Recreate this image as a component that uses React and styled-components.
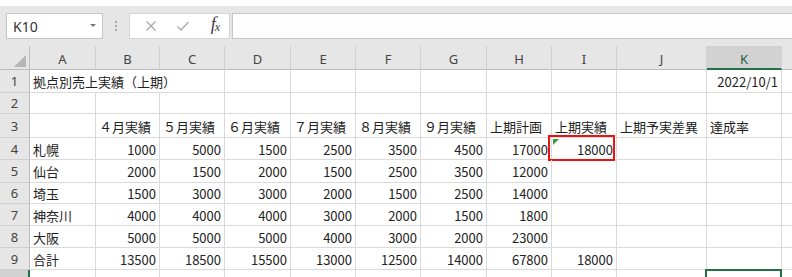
import React from "react";
import styled, { createGlobalStyle } from "styled-components";

const COLS = ["A", "B", "C", "D", "E", "F", "G", "H", "I", "J", "K", ""];
const COL_WIDTHS = [66, 64, 65, 66, 65, 65, 66, 65, 65, 90, 75, 40];
const ROW_HEIGHTS = [23, 21, 24, 22, 23, 21, 22, 22, 22, 20];

const DATA = [
  ["拠点別売上実績（上期）", "", "", "", "", "", "", "", "", "", "2022/10/1"],
  [],
  ["", "４月実績", "５月実績", "６月実績", "７月実績", "８月実績", "９月実績", "上期計画", "上期実績", "上期予実差異", "達成率"],
  ["札幌", 1000, 5000, 1500, 2500, 3500, 4500, 17000, 18000],
  ["仙台", 2000, 1500, 2000, 1500, 2500, 3500, 12000],
  ["埼玉", 1500, 3000, 3000, 2000, 1500, 2500, 14000],
  ["神奈川", 4000, 4000, 4000, 3000, 2000, 1500, 1800],
  ["大阪", 5000, 5000, 5000, 4000, 3000, 2000, 23000],
  ["合計", 13500, 18500, 15500, 13000, 12500, 14000, 67800, 18000],
  [],
];

const GlobalStyle = createGlobalStyle`
  body {
    margin: 0;
    background: #fff;
    overflow: hidden;
  }
`;

const Window = styled.div`
  width: 792px;
  height: 277px;
  overflow: hidden;
  background: #fff;
`;

const FormulaBar = styled.div`
  margin-top: 6px;
  height: 40px;
  box-sizing: border-box;
  background: #e6e6e6;
  display: flex;
  align-items: flex-start;
  padding: 7px 0 0 6px;
`;

const NameBox = styled.div`
  width: 97px;
  height: 26px;
  box-sizing: border-box;
  background: #fff;
  border: 1px solid #c6c6c6;
  display: flex;
  align-items: center;
  justify-content: space-between;
  padding: 0 6px 0 6px;
  font-family: "Noto Sans", sans-serif;
  font-size: 14px;
  color: #333;
`;

const DropArrow = styled.span`
  width: 0;
  height: 0;
  border-left: 3px solid transparent;
  border-right: 3px solid transparent;
  border-top: 3px solid #777;
  margin-top: -2px;
`;

const Dots = styled.div`
  width: 26px;
  height: 26px;
  display: flex;
  flex-direction: column;
  align-items: center;
  justify-content: center;
  gap: 2px;

  span {
    width: 2px;
    height: 2px;
    background: #a6a6a6;
  }
`;

const ButtonBox = styled.div`
  width: 101px;
  height: 26px;
  box-sizing: border-box;
  background: #fff;
  border: 1px solid #d4d4d4;
  display: flex;
  align-items: center;
  padding-left: 12px;
  gap: 14px;
  margin-right: 2px;
`;

const IconButton = styled.span`
  width: 18px;
  height: 18px;
  display: flex;
  align-items: center;
  justify-content: center;
`;

const Fx = styled.span`
  font-family: "Liberation Serif", serif;
  font-style: italic;
  font-size: 18px;
  line-height: 18px;
  color: #3c3c3c;
  letter-spacing: -1px;
  margin-top: -2px;

  sub {
    font-size: 12px;
    vertical-align: -1px;
  }
`;

const FormulaInput = styled.div`
  flex: 1;
  height: 26px;
  box-sizing: border-box;
  background: #fdfdfd;
  border: 1px solid #c6c6c6;
  border-right: none;
`;

const Sheet = styled.div`
  display: grid;
  grid-template-columns: 30px ${COL_WIDTHS.map((w) => w + "px").join(" ")};
  grid-template-rows: 24px ${ROW_HEIGHTS.map((h) => h + "px").join(" ")};
`;

const Corner = styled.div`
  position: relative;
  background: #e6e6e6;
  border-right: 1px solid #bcbcbc;
  border-bottom: 1px solid #bcbcbc;

  &::after {
    content: "";
    position: absolute;
    right: 3px;
    bottom: 2px;
    width: 0;
    height: 0;
    border-left: 12px solid transparent;
    border-bottom: 12px solid #b5b5b5;
  }
`;

const ColHeader = styled.div`
  box-sizing: border-box;
  background: ${(p) => (p.$active ? "#d2d2d2" : "#e6e6e6")};
  border-right: 1px solid #d0d0d0;
  border-bottom: ${(p) => (p.$active ? "2px solid #217346" : "1px solid #bcbcbc")};
  display: flex;
  align-items: center;
  justify-content: center;
  padding-top: 3px;
  font-family: "Noto Sans", sans-serif;
  font-size: 13px;
  color: ${(p) => (p.$active ? "#1e5e3a" : "#444")};
`;

const RowHeader = styled.div`
  box-sizing: border-box;
  background: ${(p) => (p.$active ? "#d2d2d2" : "#e6e6e6")};
  border-right: ${(p) => (p.$active ? "2px solid #217346" : "1px solid #bcbcbc")};
  border-bottom: 1px solid #d0d0d0;
  display: flex;
  align-items: center;
  justify-content: center;
  font-family: "Noto Sans", sans-serif;
  font-size: 13px;
  color: #444;
`;

const Cell = styled.div`
  position: relative;
  box-sizing: border-box;
  grid-column: ${(p) => (p.$span > 1 ? `span ${p.$span}` : "auto")};
  border-right: 1px solid #dadada;
  border-bottom: 1px solid #dadada;
  display: flex;
  align-items: center;
  justify-content: ${(p) => (p.$num ? "flex-end" : "flex-start")};
  padding: 1px 3px 0 3px;
  font-family: "Noto Sans CJK JP", sans-serif;
  font-size: 13px;
  color: #222;
  white-space: nowrap;
`;

const RedFrame = styled.div`
  position: absolute;
  left: -4px;
  top: -3px;
  right: 1px;
  bottom: -2px;
  border: 2px solid #ee1111;
  pointer-events: none;
`;

const ErrorMark = styled.span`
  position: absolute;
  left: 1px;
  top: 1px;
  width: 0;
  height: 0;
  border-top: 6px solid #35a03f;
  border-right: 6px solid transparent;
`;

const SelectFrame = styled.div`
  position: absolute;
  left: -2px;
  top: -1px;
  right: -1px;
  bottom: -4px;
  border: 2px solid #217346;
`;

function CrossIcon() {
  return (
    <svg width="12" height="12" viewBox="0 0 12 12">
      <path d="M1.5 1.5 L10.5 10.5 M10.5 1.5 L1.5 10.5" stroke="#a6a6a6" strokeWidth="1.2" fill="none" />
    </svg>
  );
}

function CheckIcon() {
  return (
    <svg width="14" height="12" viewBox="0 0 14 12">
      <path d="M1.5 6.5 L5 10 L12.5 2" stroke="#a6a6a6" strokeWidth="1.3" fill="none" />
    </svg>
  );
}

export default function App() {
  return (
    <Window>
      <GlobalStyle />
      <FormulaBar>
        <NameBox>
          K10
          <DropArrow />
        </NameBox>
        <Dots>
          <span />
          <span />
          <span />
        </Dots>
        <ButtonBox>
          <IconButton>
            <CrossIcon />
          </IconButton>
          <IconButton>
            <CheckIcon />
          </IconButton>
          <IconButton>
            <Fx>
              f<sub>x</sub>
            </Fx>
          </IconButton>
        </ButtonBox>
        <FormulaInput />
      </FormulaBar>
      <Sheet>
        <Corner />
        {COLS.map((c, i) => (
          <ColHeader key={i} $active={c === "K"}>
            {c}
          </ColHeader>
        ))}
        {DATA.map((row, r) => {
          const cells = [];
          for (let c = 0; c < COLS.length; c++) {
            const value = row[c] === undefined ? "" : row[c];
            if (r === 0 && c === 0) {
              cells.push(
                <Cell key={c} $span={3}>
                  {value}
                </Cell>
              );
              c += 2;
              continue;
            }
            const isNum = typeof value === "number" || (r === 0 && c === 10);
            cells.push(
              <Cell key={c} $num={isNum}>
                {r === 3 && c === 8 && (
                  <>
                    <ErrorMark />
                    <RedFrame />
                  </>
                )}
                {r === 9 && c === 10 && <SelectFrame />}
                {value}
              </Cell>
            );
          }
          return (
            <React.Fragment key={r}>
              <RowHeader $active={r === 9}>{r < 9 ? r + 1 : ""}</RowHeader>
              {cells}
            </React.Fragment>
          );
        })}
      </Sheet>
    </Window>
  );
}
